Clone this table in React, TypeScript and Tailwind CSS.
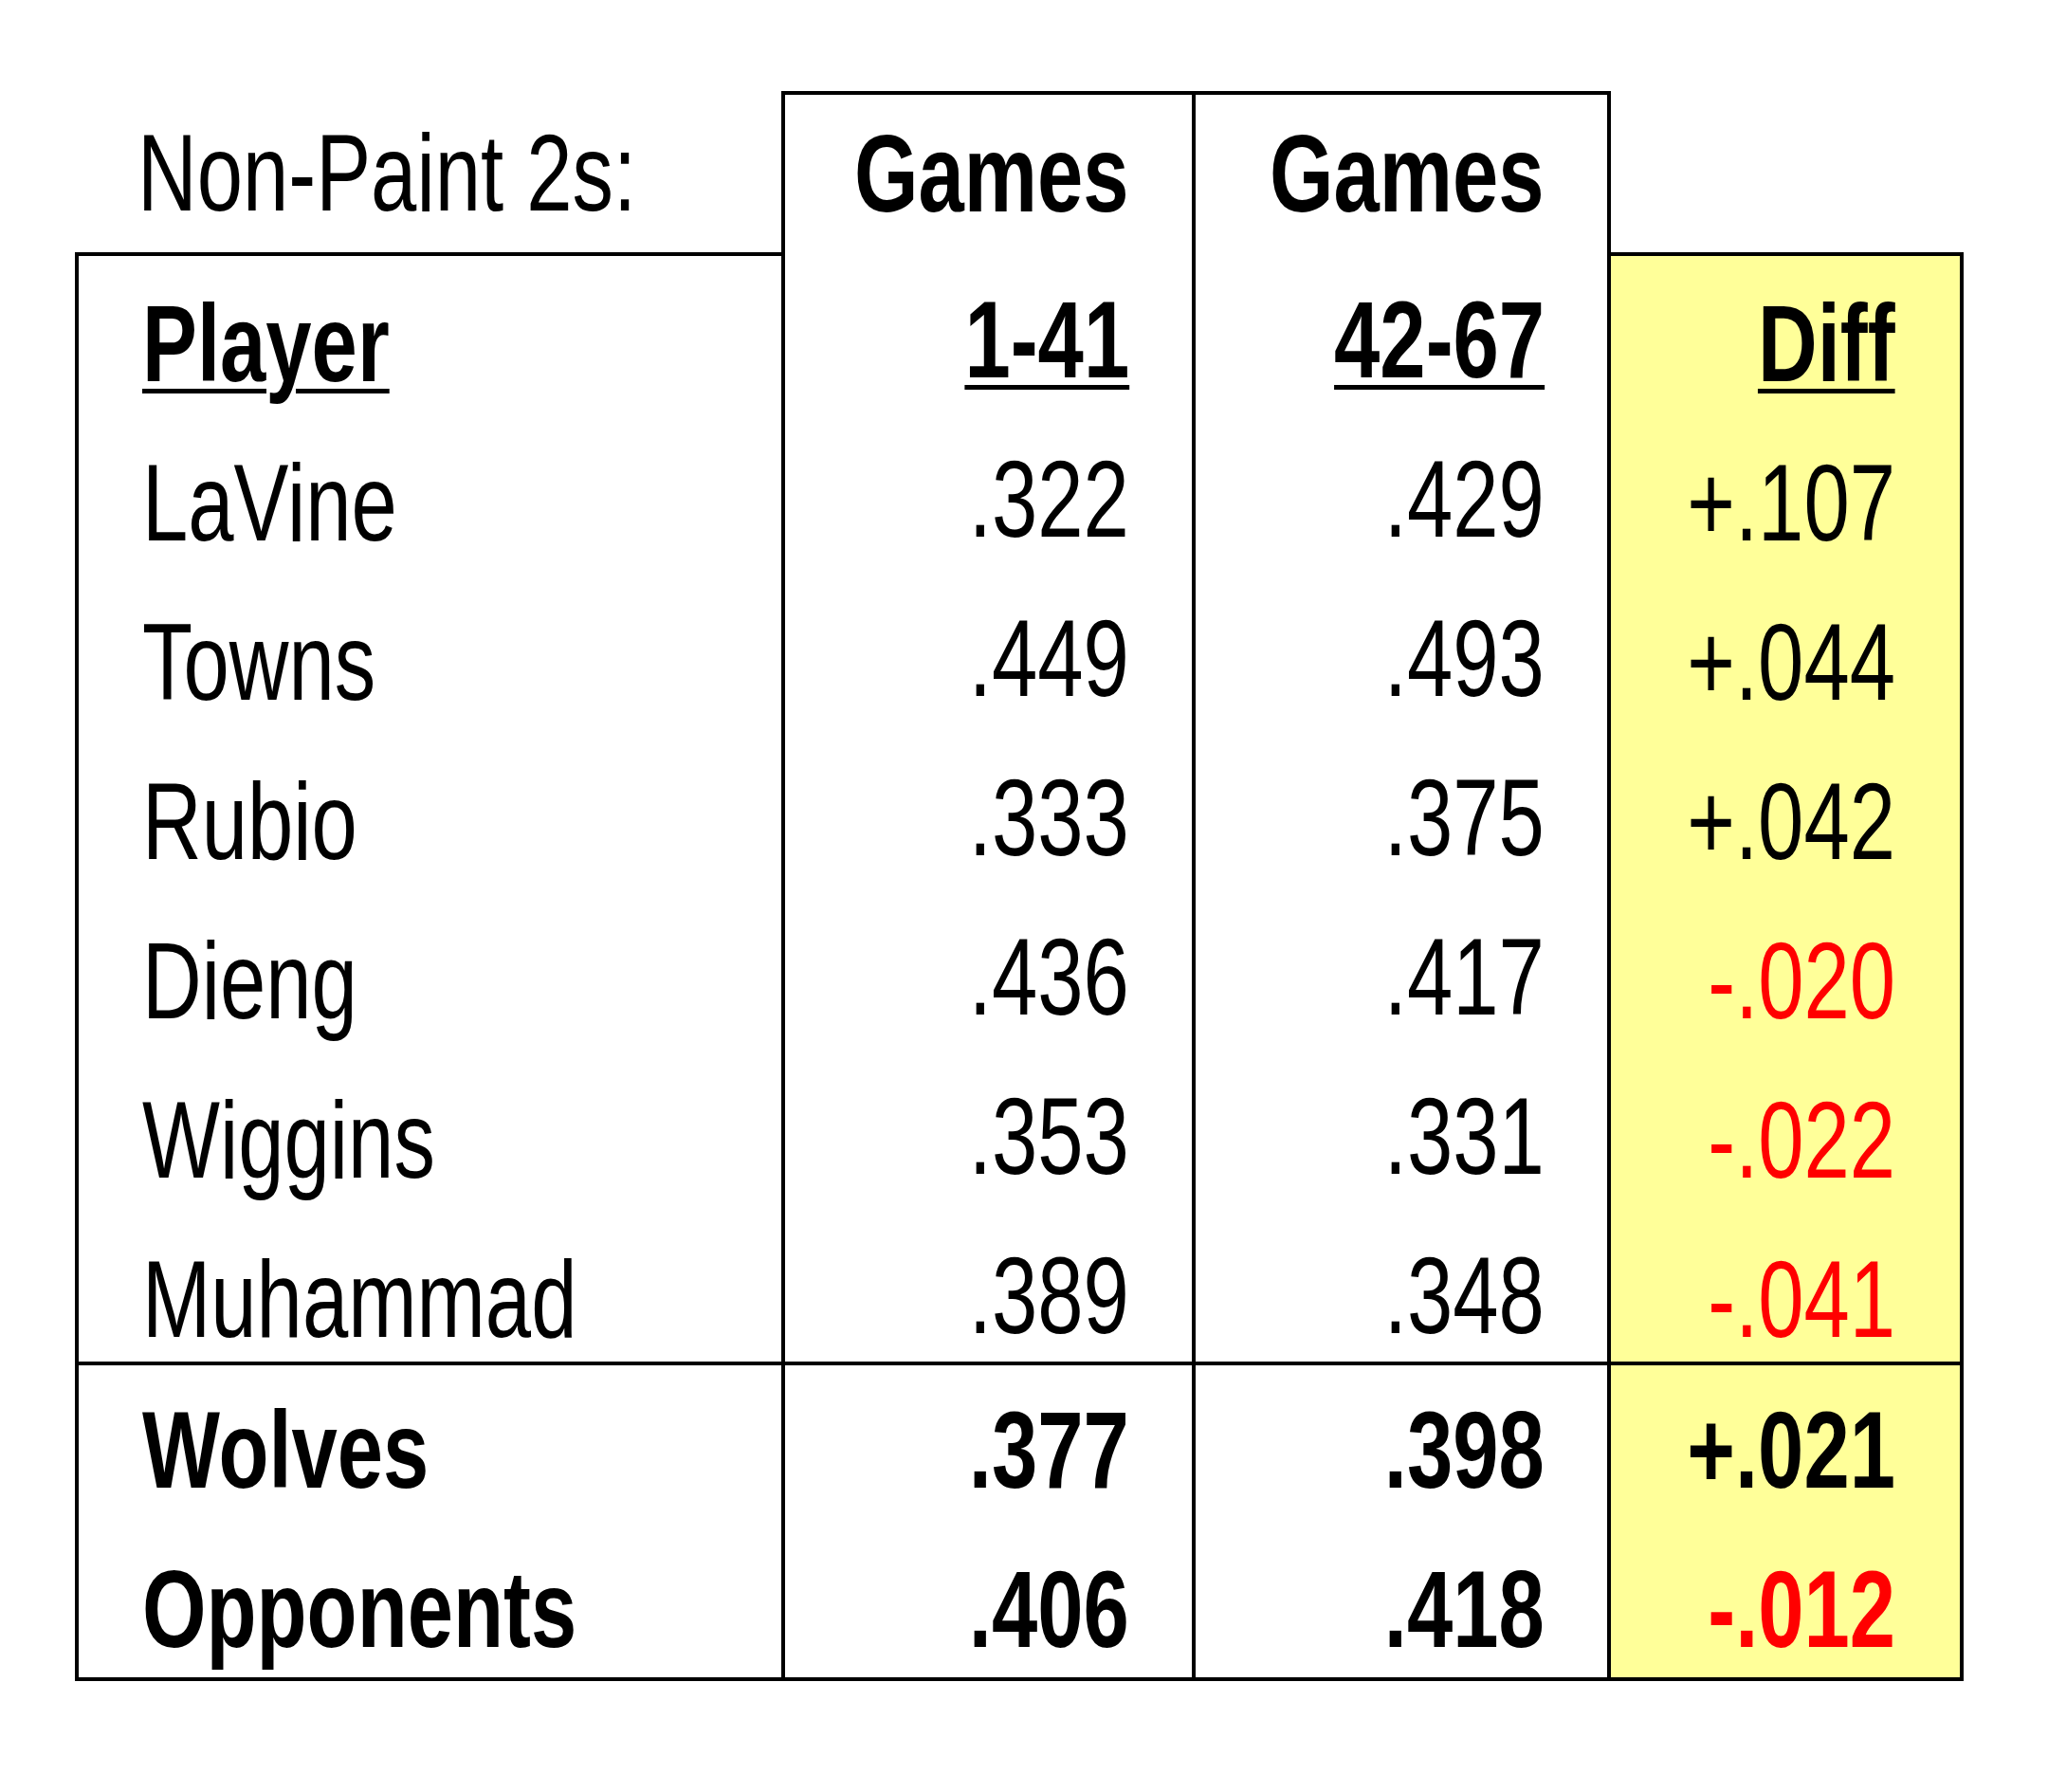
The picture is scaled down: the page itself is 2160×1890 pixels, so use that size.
const rows = [
  { name: 'LaVine', a: '.322', b: '.429', diff: '+.107' },
  { name: 'Towns', a: '.449', b: '.493', diff: '+.044' },
  { name: 'Rubio', a: '.333', b: '.375', diff: '+.042' },
  { name: 'Dieng', a: '.436', b: '.417', diff: '-.020' },
  { name: 'Wiggins', a: '.353', b: '.331', diff: '-.022' },
  { name: 'Muhammad', a: '.389', b: '.348', diff: '-.041' },
]

const totals = [
  { name: 'Wolves', a: '.377', b: '.398', diff: '+.021' },
  { name: 'Opponents', a: '.406', b: '.418', diff: '-.012' },
]

function Cell({ children, right, bold, red, underline }: { children: React.ReactNode; right?: boolean; bold?: boolean; red?: boolean; underline?: boolean }) {
  return (
    <div className={`h-[168px] leading-[168px] whitespace-nowrap ${right ? 'text-right' : 'text-left'}`}>
      <span
        className={`inline-block ${right ? 'origin-right' : 'origin-left'} scale-x-[0.755] ${bold ? 'font-bold' : 'font-normal'} ${red ? 'text-[#ff0000]' : 'text-black'} ${underline ? 'underline decoration-[5px] underline-offset-[8px]' : ''}`}
      >
        {children}
      </span>
    </div>
  )
}

export default function App() {
  return (
    <div className="w-[2160px] h-[1890px] bg-white flex pt-[96px] pl-[79px] font-['Liberation_Sans',Arial,sans-serif] text-[115px]">
      {/* player column */}
      <div className="w-[745px] flex flex-col">
        <div className="h-[170px] flex items-center pl-[66px] pt-[2px] whitespace-nowrap">
          <span className="inline-block origin-left scale-x-[0.755] leading-none">Non-Paint 2s:</span>
        </div>
        <div className="h-[1174px] border-4 border-r-0 border-black pl-[67px] pt-[8px]">
          <Cell bold underline>Player</Cell>
          {rows.map((r) => (
            <Cell key={r.name}>{r.name}</Cell>
          ))}
        </div>
        <div className="h-[333px] border-4 border-r-0 border-t-0 border-black pl-[67px] pt-[5px]">
          {totals.map((r) => (
            <Cell key={r.name} bold>{r.name}</Cell>
          ))}
        </div>
      </div>

      {/* games 1-41 */}
      <div className="w-[437px] flex flex-col">
        <div className="h-[1344px] border-4 border-black pr-[66px]">
          <div className="h-[166px] flex items-center justify-end whitespace-nowrap">
            <span className="inline-block origin-right scale-x-[0.755] font-bold leading-none">Games</span>
          </div>
          <div className="pt-[8px]">
            <Cell right bold underline>1-41</Cell>
            {rows.map((r) => (
              <Cell key={r.name} right>{r.a}</Cell>
            ))}
          </div>
        </div>
        <div className="h-[333px] border-4 border-t-0 border-black pr-[66px] pt-[5px]">
          {totals.map((r) => (
            <Cell key={r.name} right bold>{r.a}</Cell>
          ))}
        </div>
      </div>

      {/* games 42-67 */}
      <div className="w-[438px] flex flex-col">
        <div className="h-[1344px] border-4 border-l-0 border-black pr-[66px]">
          <div className="h-[166px] flex items-center justify-end whitespace-nowrap">
            <span className="inline-block origin-right scale-x-[0.755] font-bold leading-none">Games</span>
          </div>
          <div className="pt-[8px]">
            <Cell right bold underline>42-67</Cell>
            {rows.map((r) => (
              <Cell key={r.name} right>{r.b}</Cell>
            ))}
          </div>
        </div>
        <div className="h-[333px] border-4 border-l-0 border-t-0 border-black pr-[66px] pt-[5px]">
          {totals.map((r) => (
            <Cell key={r.name} right bold>{r.b}</Cell>
          ))}
        </div>
      </div>

      {/* diff */}
      <div className="w-[372px] flex flex-col pt-[170px]">
        <div className="h-[1174px] border-4 border-l-0 border-black bg-[#ffff99] pr-[68px] pt-[8px]">
          <Cell right bold underline>Diff</Cell>
          {rows.map((r) => (
            <Cell key={r.name} right red={r.diff.startsWith('-')}>{r.diff}</Cell>
          ))}
        </div>
        <div className="h-[333px] border-4 border-l-0 border-t-0 border-black bg-[#ffff99] pr-[68px] pt-[5px]">
          {totals.map((r) => (
            <Cell key={r.name} right bold red={r.diff.startsWith('-')}>{r.diff}</Cell>
          ))}
        </div>
      </div>
    </div>
  )
}
